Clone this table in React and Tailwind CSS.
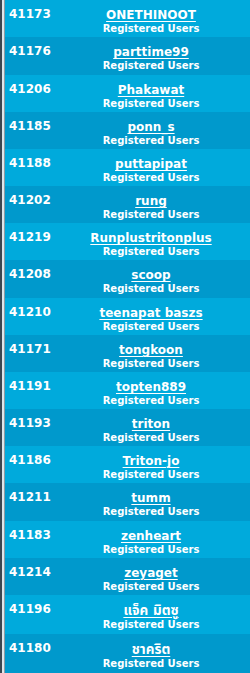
import React from "react";

const rows = [
  ["41173", "ONETHINOOT"],
  ["41176", "parttime99"],
  ["41206", "Phakawat"],
  ["41185", "ponn_s"],
  ["41188", "puttapipat"],
  ["41202", "rung"],
  ["41219", "Runplustritonplus"],
  ["41208", "scoop"],
  ["41210", "teenapat baszs"],
  ["41171", "tongkoon"],
  ["41191", "topten889"],
  ["41193", "triton"],
  ["41186", "Triton-jo"],
  ["41211", "tumm"],
  ["41183", "zenheart"],
  ["41214", "zeyaget"],
  ["41196", "แจ็ค มิตซู"],
  ["41180", "ชาคริต"],
];

const heights = [
  "h-[37px]", "h-[38px]", "h-[37px]", "h-[37px]", "h-[37px]", "h-[37px]",
  "h-[37px]", "h-[38px]", "h-[37px]", "h-[37px]", "h-[37px]", "h-[37px]",
  "h-[37px]", "h-[38px]", "h-[37px]", "h-[37px]", "h-[39px]", "h-[39px]",
];

export default function App() {
  return (
    <div
      className="flex w-[250px] min-h-[673px] bg-[#0099cc]"
      style={{ fontFamily: '"DejaVu Sans", Verdana, "Noto Sans Thai", "Noto Sans", sans-serif' }}
    >
      <div className="w-[2px] shrink-0 bg-[#3b4650]" />
      <div className="w-[2px] shrink-0 bg-[#dfe6ea]" />
      <div className="w-[1px] shrink-0 bg-[#8d9ba4]" />
      <div className="flex flex-1 flex-col">
        {rows.map(([id, name], i) => (
          <div
            key={id}
            className={`flex items-start pt-[7px] ${heights[i]} ${
              i % 2 === 0 ? "bg-[#00aadc]" : "bg-[#0099cc]"
            }`}
          >
            <div className="w-[47px] shrink-0 pl-[4px] text-[12px] leading-[15px] font-bold text-white">
              {id}
            </div>
            <div className="flex flex-1 flex-col items-center text-white font-bold">
              {i >= 16 ? (
                <a className="text-[13.5px] leading-[17px] underline underline-offset-[2px] decoration-1 whitespace-nowrap">
                  {name}
                </a>
              ) : (
                <a className="text-[12px] leading-[16px] underline underline-offset-[2px] decoration-1 whitespace-nowrap">
                  {name}
                </a>
              )}
              <span className="text-[10px] leading-[12px] whitespace-nowrap">Registered Users</span>
            </div>
          </div>
        ))}
      </div>
    </div>
  );
}
